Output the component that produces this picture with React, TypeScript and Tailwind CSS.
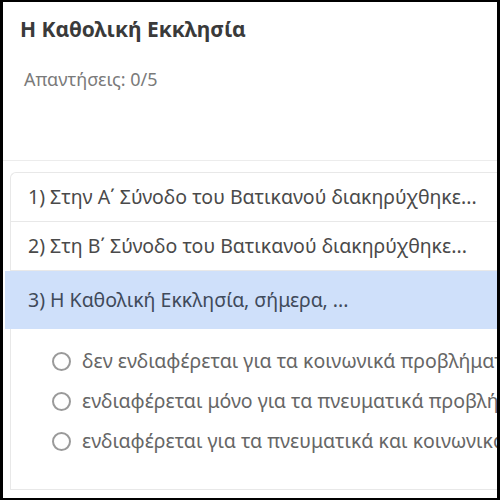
import React, { useState } from 'react';

const questions = [
  '1) Στην Α΄ Σύνοδο του Βατικανού διακηρύχθηκε...',
  '2) Στη Β΄ Σύνοδο του Βατικανού διακηρύχθηκε...',
  '3) Η Καθολική Εκκλησία, σήμερα, ...',
];

const options = [
  'δεν ενδιαφέρεται για τα κοινωνικά προβλήματα',
  'ενδιαφέρεται μόνο για τα πνευματικά προβλήματα',
  'ενδιαφέρεται για τα πνευματικά και κοινωνικά προβλήματα',
];

const App: React.FC = () => {
  const [open] = useState(2);
  const [picked, setPicked] = useState<number | null>(null);

  return (
    <div
      className="w-[500px] h-[500px] overflow-hidden bg-white border-black border-t-2 border-b-2 border-l-[3px] border-r-[3px] flex flex-col"
      style={{ fontFamily: '"Noto Sans", "Open Sans", sans-serif' }}
    >
      <div className="h-[159px] shrink-0 border-b border-[#ececec] px-[17px] pt-[13px]">
        <h1 className="text-[21px] leading-[28px] font-bold text-[#3a3a3a]">Η Καθολική Εκκλησία</h1>
        <p className="mt-[23px] text-[18px] leading-[26px] text-[#7a7a7a] pl-[4px]">Απαντήσεις: 0/5</p>
      </div>

      <div className="flex-1 pt-[11px] pl-[7px] bg-white">
        <div className="border-l border-t border-b border-[#e8e8e8] rounded-tl-[6px] h-[318px]">
          {questions.map((q, i) => (
            <div key={q}>
              <div
                className={
                  i === open
                    ? 'h-[58px] -ml-[6px] pl-[23px] flex items-center bg-[#cfe0fa] text-[#3f4a5a] text-[19.5px] whitespace-nowrap'
                    : 'h-[49px] pl-[17px] flex items-center border-b border-[#e8e8e8] text-[#4a4a4a] text-[19.5px] whitespace-nowrap'
                }
              >
                {q}
              </div>
              {i === open && (
                <div className="pt-[12px] pl-[41px] flex flex-col">
                  {options.map((o, j) => (
                    <label key={o} className="h-[40px] flex items-center gap-[11px] whitespace-nowrap cursor-pointer">
                      <span
                        className={
                          picked === j
                            ? 'w-[19px] h-[19px] shrink-0 rounded-full border-2 border-[#4a7bd0] bg-[#4a7bd0]'
                            : 'w-[19px] h-[19px] shrink-0 rounded-full border-2 border-[#9a9a9a] bg-white'
                        }
                        onClick={() => setPicked(j)}
                      />
                      <span className="text-[19.5px] text-[#666666]">{o}</span>
                    </label>
                  ))}
                </div>
              )}
            </div>
          ))}
        </div>
      </div>
    </div>
  );
};

export default App;
